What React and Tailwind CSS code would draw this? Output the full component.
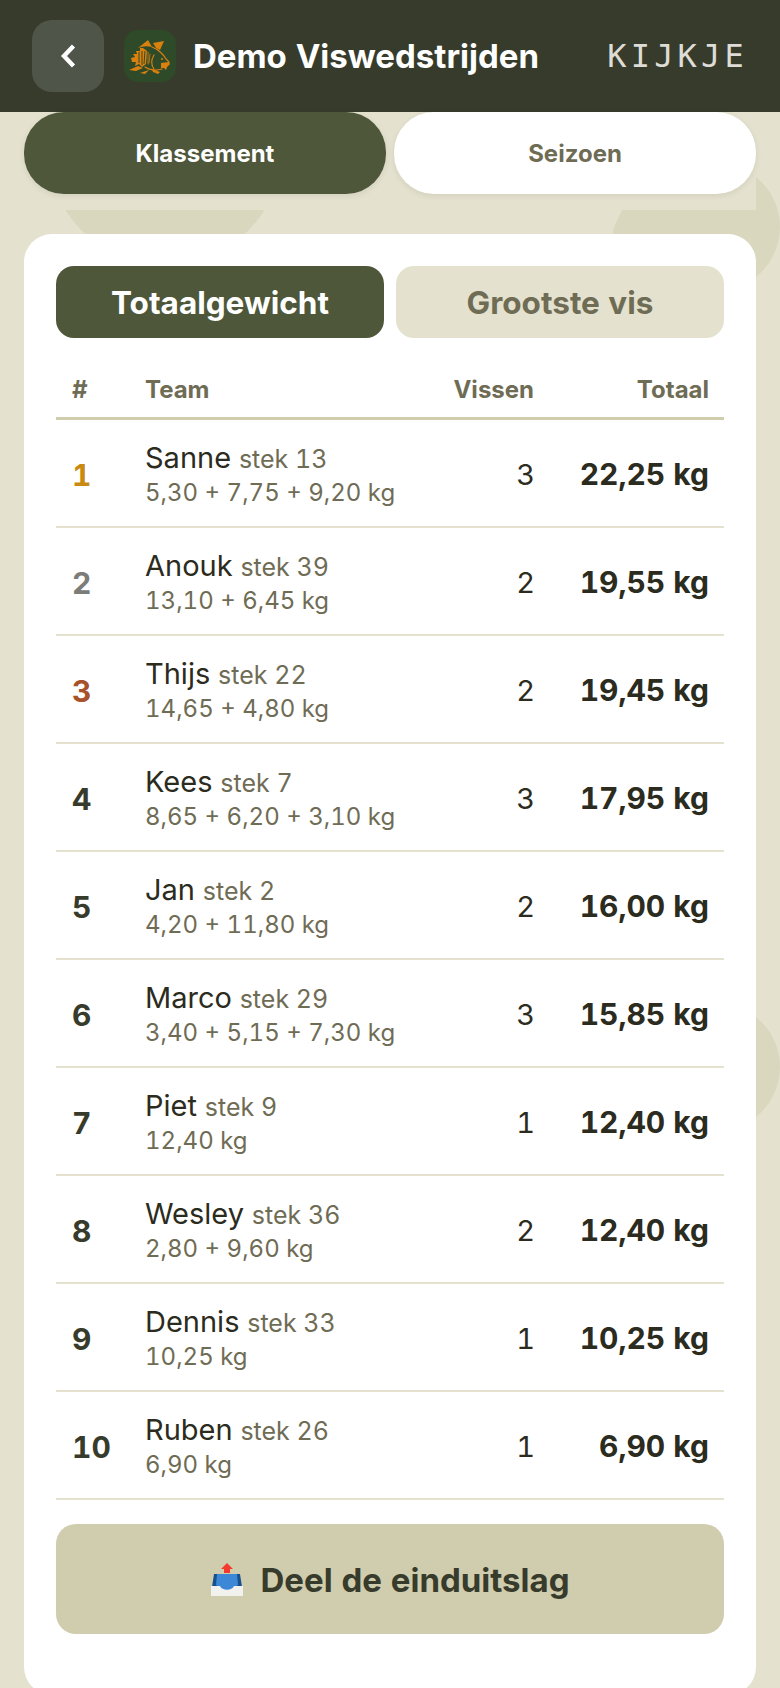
const rows = [
  { pos: 1, name: 'Sanne', stek: 'stek 13', weights: '5,30 + 7,75 + 9,20 kg', fish: 3, total: '22,25 kg', color: 'text-[#c98a12]' },
  { pos: 2, name: 'Anouk', stek: 'stek 39', weights: '13,10 + 6,45 kg', fish: 2, total: '19,55 kg', color: 'text-[#7c7c78]' },
  { pos: 3, name: 'Thijs', stek: 'stek 22', weights: '14,65 + 4,80 kg', fish: 2, total: '19,45 kg', color: 'text-[#a8522c]' },
  { pos: 4, name: 'Kees', stek: 'stek 7', weights: '8,65 + 6,20 + 3,10 kg', fish: 3, total: '17,95 kg', color: 'text-[#373b2b]' },
  { pos: 5, name: 'Jan', stek: 'stek 2', weights: '4,20 + 11,80 kg', fish: 2, total: '16,00 kg', color: 'text-[#373b2b]' },
  { pos: 6, name: 'Marco', stek: 'stek 29', weights: '3,40 + 5,15 + 7,30 kg', fish: 3, total: '15,85 kg', color: 'text-[#373b2b]' },
  { pos: 7, name: 'Piet', stek: 'stek 9', weights: '12,40 kg', fish: 1, total: '12,40 kg', color: 'text-[#373b2b]' },
  { pos: 8, name: 'Wesley', stek: 'stek 36', weights: '2,80 + 9,60 kg', fish: 2, total: '12,40 kg', color: 'text-[#373b2b]' },
  { pos: 9, name: 'Dennis', stek: 'stek 33', weights: '10,25 kg', fish: 1, total: '10,25 kg', color: 'text-[#373b2b]' },
  { pos: 10, name: 'Ruben', stek: 'stek 26', weights: '6,90 kg', fish: 1, total: '6,90 kg', color: 'text-[#373b2b]' },
];

const CarpLogo = () => (
  <svg viewBox="0 0 52 52" className="h-[52px] w-[52px] rounded-[14px] bg-[#2f4a28]">
    <g fill="#d9800f">
      <path d="M14 18 L24 10 L28 17 Q21 15 14 18 Z" />
      <path d="M29 13 L40 11 L36 20 L32 18 Z" />
      <path d="M7 28 L11 27 L9 24 L13 24 L12 21 L16 21 L16 18 L19 18 L23 21 L22 34 L18 37 L15 34 L11 36 L12 32 L8 32 Z" />
      <path d="M5 40 L14 36 L19 38 L12 41 Z" />
      <path d="M16 43 L25 40 L21 44 Z" />
      <path d="M28 39 L36 42 L34 44 L29 42 Z" />
      <path d="M37 33 L45 32 L46 34 L43 37 L42 40 L40 38 L37 38 Z" />
    </g>
    <g fill="none" stroke="#2f4a28" strokeWidth="1">
      <path d="M15 22 L15 33 M18 21 L18 35 M21 21 L20 34" />
    </g>
    <g fill="none" stroke="#d9800f" strokeWidth="1.2" strokeLinecap="round">
      <path d="M28 17 C34 19 40 25 42 29 L45 32" />
      <path d="M21 37 C25 40 32 41 38 39" />
      <path d="M30 25 C27 30 27 35 30 39" />
      <path d="M24 22 L24 34 M26 24 L25 33" strokeWidth="0.8" />
    </g>
    <circle cx="38" cy="29" r="1" fill="#d9800f" />
  </svg>
);

const OutboxIcon = () => (
  <svg viewBox="0 0 32 33" className="h-[33px] w-[32px] shrink-0">
    <path d="M16 0 L22 6 L19 6 L19 10 L13 10 L13 6 L10 6 Z" fill="#f5392f" />
    <path d="M3 11 L29 11 L31 24 L1 24 Z" fill="#17508f" />
    <path d="M6 11 L26 11 L27 22 L20 27 L12 27 L5 22 Z" fill="#3d88d6" />
    <path d="M0 23 L9 23 C11 28 21 28 23 23 L32 23 L32 33 L0 33 Z" fill="#f1f1ee" />
  </svg>
);

export default function App() {
  return (
    <div className="relative h-[1688px] w-[780px] overflow-hidden bg-[#e4e2ce] font-['Inter',sans-serif] tabular-nums">
      {/* achtergrond cirkels */}
      <div className="absolute left-[47px] top-[29px] h-[236px] w-[236px] rounded-full bg-[#d9d8bf]" />
      <div className="absolute left-[611px] top-[180px] h-[136px] w-[136px] rounded-full bg-[#d9d8bf]" />
      <div className="absolute left-[652px] top-[163px] h-[128px] w-[128px] rounded-full bg-[#d9d8bf]" />
      <div className="absolute left-[652px] top-[1003px] h-[128px] w-[128px] rounded-full bg-[#d9d8bf]" />

      <div className="relative">
        <header className="flex h-[112px] items-center bg-[#373b2b] pl-8 pr-[32px]">
          <button className="flex h-[72px] w-[72px] items-center justify-center rounded-[20px] bg-[#50554a] text-white">
            <svg viewBox="0 0 16 24" className="h-[24px] w-[16px]" fill="none" stroke="currentColor" strokeWidth="4.4">
              <path d="M13.5 2 L4 12 L13.5 22" />
            </svg>
          </button>
          <div className="ml-5">
            <CarpLogo />
          </div>
          <h1 className="ml-[17px] text-[33px] font-bold leading-none text-white">Demo Viswedstrijden</h1>
          <span className="ml-auto font-['DejaVu_Sans_Mono',monospace] text-[32px] leading-none tracking-[4.2px] text-[#dddcd6]">KIJKJE</span>
        </header>

        <div className="flex h-[98px] w-[756px] items-start gap-2 bg-[#e4e2ce] pl-6">
          <button className="h-[82px] w-[362px] rounded-[40px] bg-[#4e5739] pt-[2px] text-[24px] font-bold text-white shadow-[0_2px_6px_rgba(0,0,0,0.08)]">Klassement</button>
          <button className="h-[82px] w-[362px] rounded-[40px] bg-white pt-[2px] text-[24px] font-bold text-[#6f6c55] shadow-[0_2px_6px_rgba(0,0,0,0.08)]">Seizoen</button>
        </div>

        <main className="mx-6 mt-6 h-[1461px] rounded-[28px] bg-white px-8 pt-8">
          <div className="flex gap-3">
            <button className="h-[72px] flex-1 rounded-[18px] bg-[#4e5739] pt-[2px] text-[31.5px] font-bold text-white">Totaalgewicht</button>
            <button className="h-[72px] flex-1 rounded-[18px] bg-[#e4e2ce] pt-[2px] text-[31.5px] font-bold text-[#6f6c55]">Grootste vis</button>
          </div>

          <div className="mt-4 flex h-[66px] items-center border-b-[3px] border-[#d0ccae] pt-2 text-[24px] font-bold text-[#6f6c55]">
            <div className="w-[89px] pl-4">#</div>
            <div className="flex-1">Team</div>
            <div className="w-[101px] text-right">Vissen</div>
            <div className="w-[190px] pr-[15px] text-right">Totaal</div>
          </div>

          {rows.map((row) => (
            <div key={row.pos} className="flex h-[108px] items-center border-b-2 border-[#e4e2ce]">
              <div className={`w-[89px] pl-4 pt-1 text-[30px] font-bold ${row.color}`}>{row.pos}</div>
              <div className="flex-1 pt-[2px]">
                <div className="text-[29px] leading-[36px] text-[#2b2b20]">
                  {row.name} <span className="text-[25px] text-[#6f6c55]">{row.stek}</span>
                </div>
                <div className="text-[24px] leading-[32px] text-[#6f6c55]">{row.weights}</div>
              </div>
              <div className="w-[102px] pt-1 text-right text-[29px] text-[#2b2b20]">{row.fish}</div>
              <div className="w-[189px] pt-[2px] pr-[15px] text-right text-[30px] font-bold text-[#2b2b20]">{row.total}</div>
            </div>
          ))}

          <button className="mt-6 flex h-[110px] w-full items-center justify-center gap-[18px] rounded-[20px] bg-[#d0ccae] text-[33px] font-bold text-[#373b2b]">
            <OutboxIcon />
            <span className="pt-1">Deel de einduitslag</span>
          </button>
        </main>
      </div>
    </div>
  );
}
